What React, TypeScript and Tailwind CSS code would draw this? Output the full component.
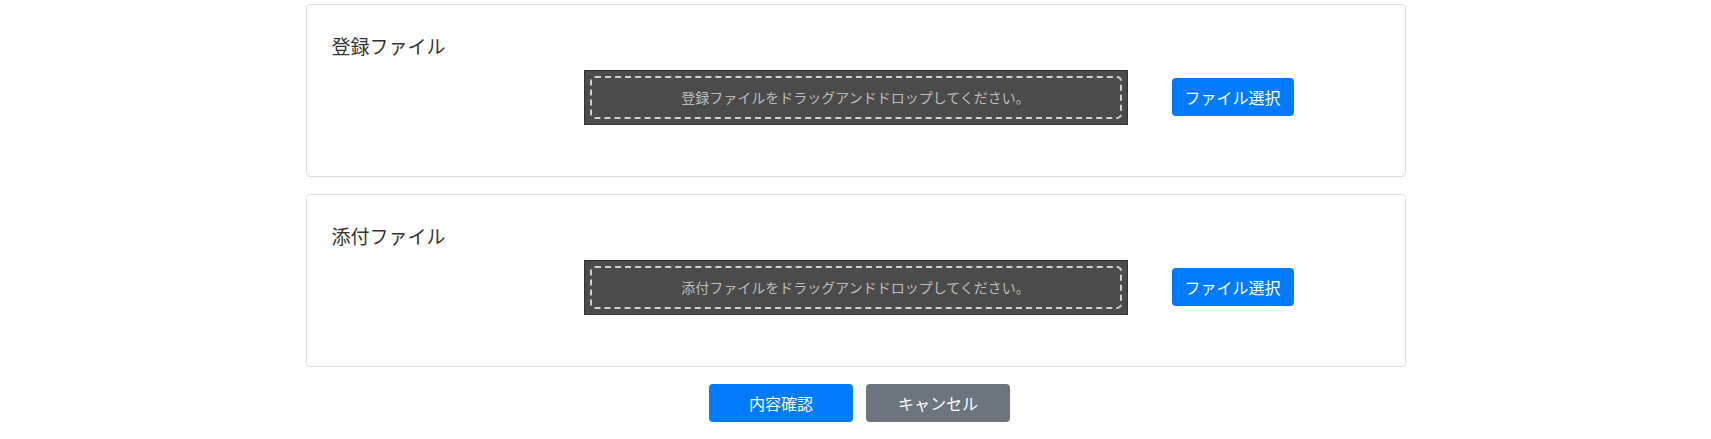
import React from 'react';

const font = { fontFamily: '"Noto Sans CJK JP", "Noto Sans", sans-serif' };

interface UploadCardProps {
  title: string;
  hint: string;
}

const UploadCard: React.FC<UploadCardProps> = ({ title, hint }) => (
  <div className="h-[173px] rounded border border-[#dedede] bg-white px-[25px] pt-[28px]">
    <div className="h-[26px] text-[19px] leading-[26px] text-[#333]">{title}</div>
    <div className="mt-[11px] flex items-start gap-[44px] pl-[252px]">
      {/* drop zone with inner dashed frame */}
      <div className="h-[55px] w-[544px] border border-[#333] bg-[#4b4b4b] p-[5px]">
        <div className="flex h-full items-center justify-center rounded-[5px] border-2 border-dashed border-[#cfcfcf] text-[14px] text-[#bdbdbd]">
          {hint}
        </div>
      </div>
      <button className="mt-[8px] h-[38px] w-[122px] rounded bg-[#007bff] text-[16px] text-white">
        ファイル選択
      </button>
    </div>
  </div>
);

export default function App() {
  return (
    <div className="min-h-screen bg-white pt-[4px]" style={font}>
      <div className="mx-auto flex w-[1100px] flex-col gap-[17px]">
        <UploadCard title="登録ファイル" hint="登録ファイルをドラッグアンドドロップしてください。" />
        <UploadCard title="添付ファイル" hint="添付ファイルをドラッグアンドドロップしてください。" />
        <div className="flex justify-center gap-[13px] pl-[8px]">
          <button className="h-[38px] w-[144px] rounded bg-[#007bff] text-[16px] text-white">内容確認</button>
          <button className="h-[38px] w-[144px] rounded bg-[#6c757d] text-[16px] text-white">キャンセル</button>
        </div>
      </div>
    </div>
  );
}
